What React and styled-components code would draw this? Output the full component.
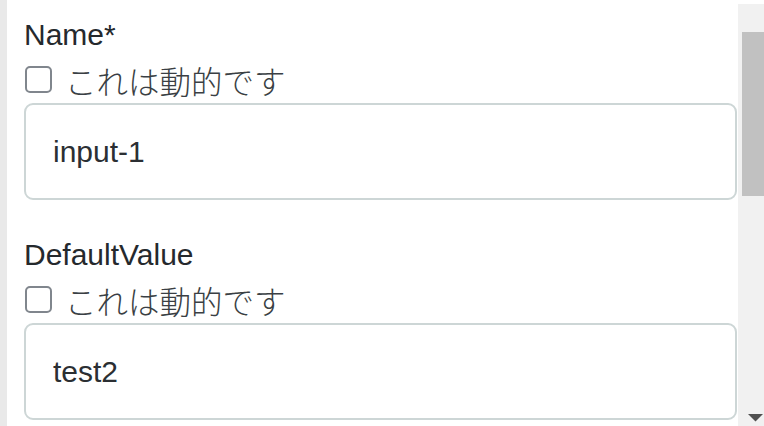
import React from "react";
import styled, { createGlobalStyle } from "styled-components";

const GlobalStyle = createGlobalStyle`
  html, body { margin: 0; padding: 0; background: #ffffff; }
  * { box-sizing: border-box; }
`;

const Panel = styled.div`
  display: flex;
  width: 764px;
  height: 426px;
  overflow: hidden;
  background: #ffffff;
  font-family: "Liberation Sans", Arial, "Noto Sans CJK JP", sans-serif;
`;

const Strip = styled.div`
  width: 7px;
  flex: none;
  background: #e9e9e9;
`;

const Content = styled.div`
  flex: 1;
  padding: 12px 1px 0 17px;
  overflow: hidden;
`;

const Field = styled.div`
  margin-bottom: 32px;
`;

const Label = styled.div`
  font-size: 30px;
  line-height: 45px;
  color: #25292d;
`;

const CheckRow = styled.label`
  display: flex;
  align-items: center;
  height: 45px;
  gap: 13px;
  font-family: "Liberation Sans", "Noto Sans CJK JP", sans-serif;
  font-size: 31.5px;
  font-weight: 300;
  color: #3a3f44;
`;

const Box = styled.input.attrs({ type: "checkbox" })`
  appearance: none;
  margin: 0 0 0 1px;
  width: 27px;
  height: 27px;
  border: 2px solid #80868d;
  border-radius: 5px;
  background: #ffffff;
`;

const TextInput = styled.input`
  display: block;
  width: 100%;
  height: 97px;
  margin-top: 1px;
  padding: 0 0 0 27px;
  border: 2px solid #cdd6d6;
  border-radius: 9px;
  background: #ffffff;
  font-family: "Liberation Sans", Arial, sans-serif;
  font-size: 30px;
  color: #2b2f33;
  outline: none;
`;

const Scrollbar = styled.div`
  width: 26px;
  flex: none;
  margin-top: 4px;
  background: #f1f1f1;
  display: flex;
  flex-direction: column;
`;

const Thumb = styled.div`
  margin: 28px 0 0 4px;
  height: 164px;
  background: #c1c1c1;
`;

const Track = styled.div`
  flex: 1;
`;

const ArrowBox = styled.div`
  height: 12px;
  display: flex;
  justify-content: flex-end;
  align-items: flex-start;
  padding-right: 1px;
`;

function DownArrow() {
  return (
    <svg width="15" height="8" viewBox="0 0 15 8">
      <polygon points="0,0 15,0 7.5,7.5" fill="#505050" />
    </svg>
  );
}

function FieldBlock({ label, value }) {
  return (
    <Field>
      <Label>{label}</Label>
      <CheckRow>
        <Box />
        <span>これは動的です</span>
      </CheckRow>
      <TextInput defaultValue={value} />
    </Field>
  );
}

export default function App() {
  return (
    <>
      <GlobalStyle />
      <Panel>
        <Strip />
        <Content>
          <FieldBlock label="Name*" value="input-1" />
          <FieldBlock label="DefaultValue" value="test2" />
        </Content>
        <Scrollbar>
          <Thumb />
          <Track />
          <ArrowBox>
            <DownArrow />
          </ArrowBox>
        </Scrollbar>
      </Panel>
    </>
  );
}
